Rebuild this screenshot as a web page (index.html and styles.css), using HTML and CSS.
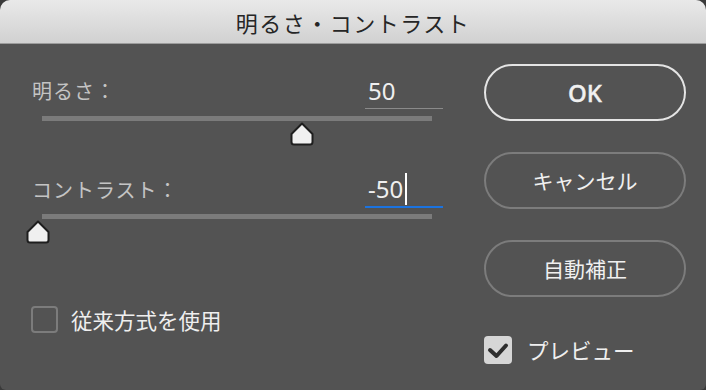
FILE: index.html
```html
<!DOCTYPE html>
<html lang="ja">
<head>
<meta charset="utf-8">
<title>明るさ・コントラスト</title>
<link rel="stylesheet" href="styles.css">
</head>
<body>
<div class="dialog">
  <div class="titlebar">明るさ・コントラスト</div>
  <div class="content">
    <div class="left">
      <div class="field">
        <span class="label">明るさ：</span>
        <span class="value">50</span>
      </div>
      <div class="slider">
        <div class="track"></div>
        <svg class="thumb" style="left:66.67%" viewBox="0 0 24 24"><path d="M12 1.5 L22.5 12 V20 a2.5 2.5 0 0 1 -2.5 2.5 H4 a2.5 2.5 0 0 1 -2.5 -2.5 V12 Z"/></svg>
      </div>
      <div class="field field-b">
        <span class="label">コントラスト：</span>
        <span class="value active">-50<span class="caret"></span></span>
      </div>
      <div class="slider slider-b">
        <div class="track"></div>
        <svg class="thumb" style="left:-1%" viewBox="0 0 24 24"><path d="M12 1.5 L22.5 12 V20 a2.5 2.5 0 0 1 -2.5 2.5 H4 a2.5 2.5 0 0 1 -2.5 -2.5 V12 Z"/></svg>
      </div>
      <div class="check legacy"><span class="box"></span><span>従来方式を使用</span></div>
    </div>
    <div class="right">
      <div class="btn primary">OK</div>
      <div class="btn">キャンセル</div>
      <div class="btn">自動補正</div>
      <div class="check preview">
        <span class="box checked"><svg viewBox="0 0 28 28"><path d="M6 14 L12.5 20 L22 9.5"/></svg></span>
        <span>プレビュー</span>
      </div>
    </div>
  </div>
</div>
</body>
</html>
```
FILE: styles.css
```css
html, body {
  margin: 0;
  padding: 0;
  background: #3a3a3a;
}
.dialog {
  width: 706px;
  height: 390px;
  background: #535353;
  border-radius: 10px 10px 6px 6px;
  overflow: hidden;
  font-family: "Noto Sans CJK JP", "Noto Sans", sans-serif;
  display: flex;
  flex-direction: column;
}
.titlebar {
  height: 43px;
  border-bottom: 1px solid #9c9c9c;
  background: linear-gradient(#e9e9e9, #d1d1d1);
  display: flex;
  align-items: center;
  justify-content: center;
  font-size: 22px;
  letter-spacing: 1.5px;
  line-height: 1;
  color: #262626;
}
.content {
  display: flex;
  flex: 1;
}
.left {
  width: 411px;
  padding: 28px 0 0 32px;
}
.field {
  display: flex;
  justify-content: space-between;
  align-items: center;
  height: 37px;
}
.field-b {
  margin-top: 25px;
}
.label {
  font-size: 20px;
  letter-spacing: 1px;
  line-height: 1;
  color: #c4c4c4;
}
.value {
  width: 78px;
  height: 37px;
  box-sizing: border-box;
  border-bottom: 1.5px solid #8a8a8a;
  padding-left: 3px;
  font-family: "Noto Sans", "Noto Sans CJK JP", sans-serif;
  font-size: 24px;
  line-height: 35px;
  color: #efefef;
  display: flex;
  align-items: center;
}
.value.active {
  border-bottom: 2px solid #1b73e0;
}
.caret {
  display: inline-block;
  width: 2px;
  height: 32px;
  background: #ffffff;
  margin-left: 2px;
}
.slider {
  position: relative;
  width: 390px;
  height: 30px;
  margin: 7px 0 0 10px;
}
.slider-b {
  margin-top: 6px;
}
.track {
  height: 5px;
  background: #7b7b7b;
}
.thumb {
  position: absolute;
  top: 6px;
  width: 24px;
  height: 24px;
  margin-left: -12px;
}
.thumb path {
  fill: #f0f0f0;
  stroke: #1e1e1e;
  stroke-width: 2;
  stroke-linejoin: round;
}
.check {
  display: flex;
  align-items: center;
  color: #efefef;
  font-size: 21.5px;
  line-height: 1;
}
.legacy {
  margin-top: 62px;
  margin-left: -1px;
  gap: 13px;
}
.box {
  width: 27px;
  height: 27px;
  box-sizing: border-box;
  border: 2px solid #7c7c7c;
  border-radius: 4px;
  flex: none;
}
.right {
  width: 202px;
  margin-left: 41px;
  padding-top: 20px;
  display: flex;
  flex-direction: column;
}
.btn {
  height: 57px;
  box-sizing: border-box;
  border: 2px solid #7c7c7c;
  border-radius: 29px;
  color: #f0f0f0;
  font-size: 21px;
  line-height: 1;
  display: flex;
  align-items: center;
  justify-content: center;
  margin-bottom: 31px;
}
.btn.primary {
  border-color: #e4e4e4;
  font-family: "Noto Sans", "Noto Sans CJK JP", sans-serif;
  font-weight: 500;
  font-size: 24px;
  -webkit-text-stroke: 0.4px #f0f0f0;
}
.btn:nth-child(3) {
  margin-bottom: 39px;
}
.preview {
  gap: 15px;
}
.box.checked {
  width: 28px;
  height: 28px;
  border: none;
  background: #d6d6d6;
}
.box.checked svg {
  display: block;
  width: 28px;
  height: 28px;
}
.box.checked path {
  fill: none;
  stroke: #2e2e2e;
  stroke-width: 4;
  stroke-linecap: round;
  stroke-linejoin: round;
}
```
